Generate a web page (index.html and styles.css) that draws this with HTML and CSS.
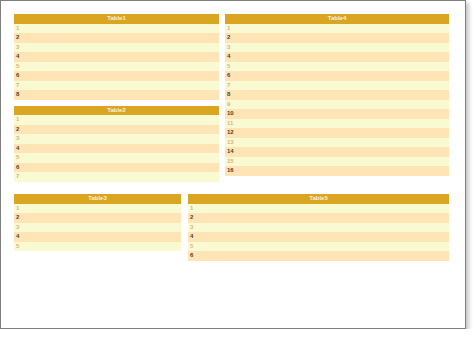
FILE: index.html
```html
<!DOCTYPE html>
<html>
<head>
<meta charset="utf-8">
<link rel="stylesheet" href="styles.css">
</head>
<body>
<div class="panel">
  <div class="top">
    <div class="col left">
      <div class="tbl">
        <div class="hdr">Table1</div>
        <div class="row">1</div><div class="row">2</div><div class="row">3</div><div class="row">4</div>
        <div class="row">5</div><div class="row">6</div><div class="row">7</div><div class="row">8</div>
      </div>
      <div class="tbl">
        <div class="hdr">Table2</div>
        <div class="row">1</div><div class="row">2</div><div class="row">3</div><div class="row">4</div>
        <div class="row">5</div><div class="row">6</div><div class="row">7</div>
      </div>
    </div>
    <div class="col right">
      <div class="tbl">
        <div class="hdr">Table4</div>
        <div class="row">1</div><div class="row">2</div><div class="row">3</div><div class="row">4</div>
        <div class="row">5</div><div class="row">6</div><div class="row">7</div><div class="row">8</div>
        <div class="row">9</div><div class="row">10</div><div class="row">11</div><div class="row">12</div>
        <div class="row">13</div><div class="row">14</div><div class="row">15</div><div class="row">16</div>
      </div>
    </div>
  </div>
  <div class="bottom">
    <div class="tbl t3">
      <div class="hdr">Table3</div>
      <div class="row">1</div><div class="row">2</div><div class="row">3</div><div class="row">4</div><div class="row">5</div>
    </div>
    <div class="tbl t5">
      <div class="hdr">Table5</div>
      <div class="row">1</div><div class="row">2</div><div class="row">3</div><div class="row">4</div><div class="row">5</div><div class="row">6</div>
    </div>
  </div>
</div>
</body>
</html>
```
FILE: styles.css
```css
html, body {
  margin: 0;
  padding: 0;
  background: #ffffff;
}
body {
  font-family: "Liberation Sans", Arial, sans-serif;
}
.panel {
  box-sizing: border-box;
  width: 466px;
  height: 329px;
  border: 1px solid #7f7f7f;
  background: #ffffff;
  box-shadow: 3px 3px 4px rgba(0, 0, 0, 0.22);
  padding: 13px 0 0 13px;
  display: flex;
  flex-direction: column;
  align-items: flex-start;
}
.top {
  display: flex;
  align-items: flex-start;
  gap: 6px;
}
.col {
  display: flex;
  flex-direction: column;
  gap: 6px;
}
.left { width: 205px; }
.right { width: 224px; }
.bottom {
  display: flex;
  align-items: flex-start;
  gap: 7px;
  margin-top: 12.5px;
}
.t3 { width: 167px; }
.t5 { width: 261px; }
.tbl {
  display: flex;
  flex-direction: column;
}
.hdr {
  height: 9.5px;
  line-height: 9.5px;
  background: #daa520;
  color: #fbf1dc;
  font-size: 6px;
  font-weight: bold;
  text-align: center;
}
.row {
  height: 9.5px;
  line-height: 9.5px;
  font-size: 6px;
  font-weight: bold;
  padding-left: 2px;
}
.row:nth-child(even) {
  background: #fafad2;
  color: #d2b48c;
}
.row:nth-child(odd) {
  background: #ffe4b5;
  color: #4f3f2e;
}
```
